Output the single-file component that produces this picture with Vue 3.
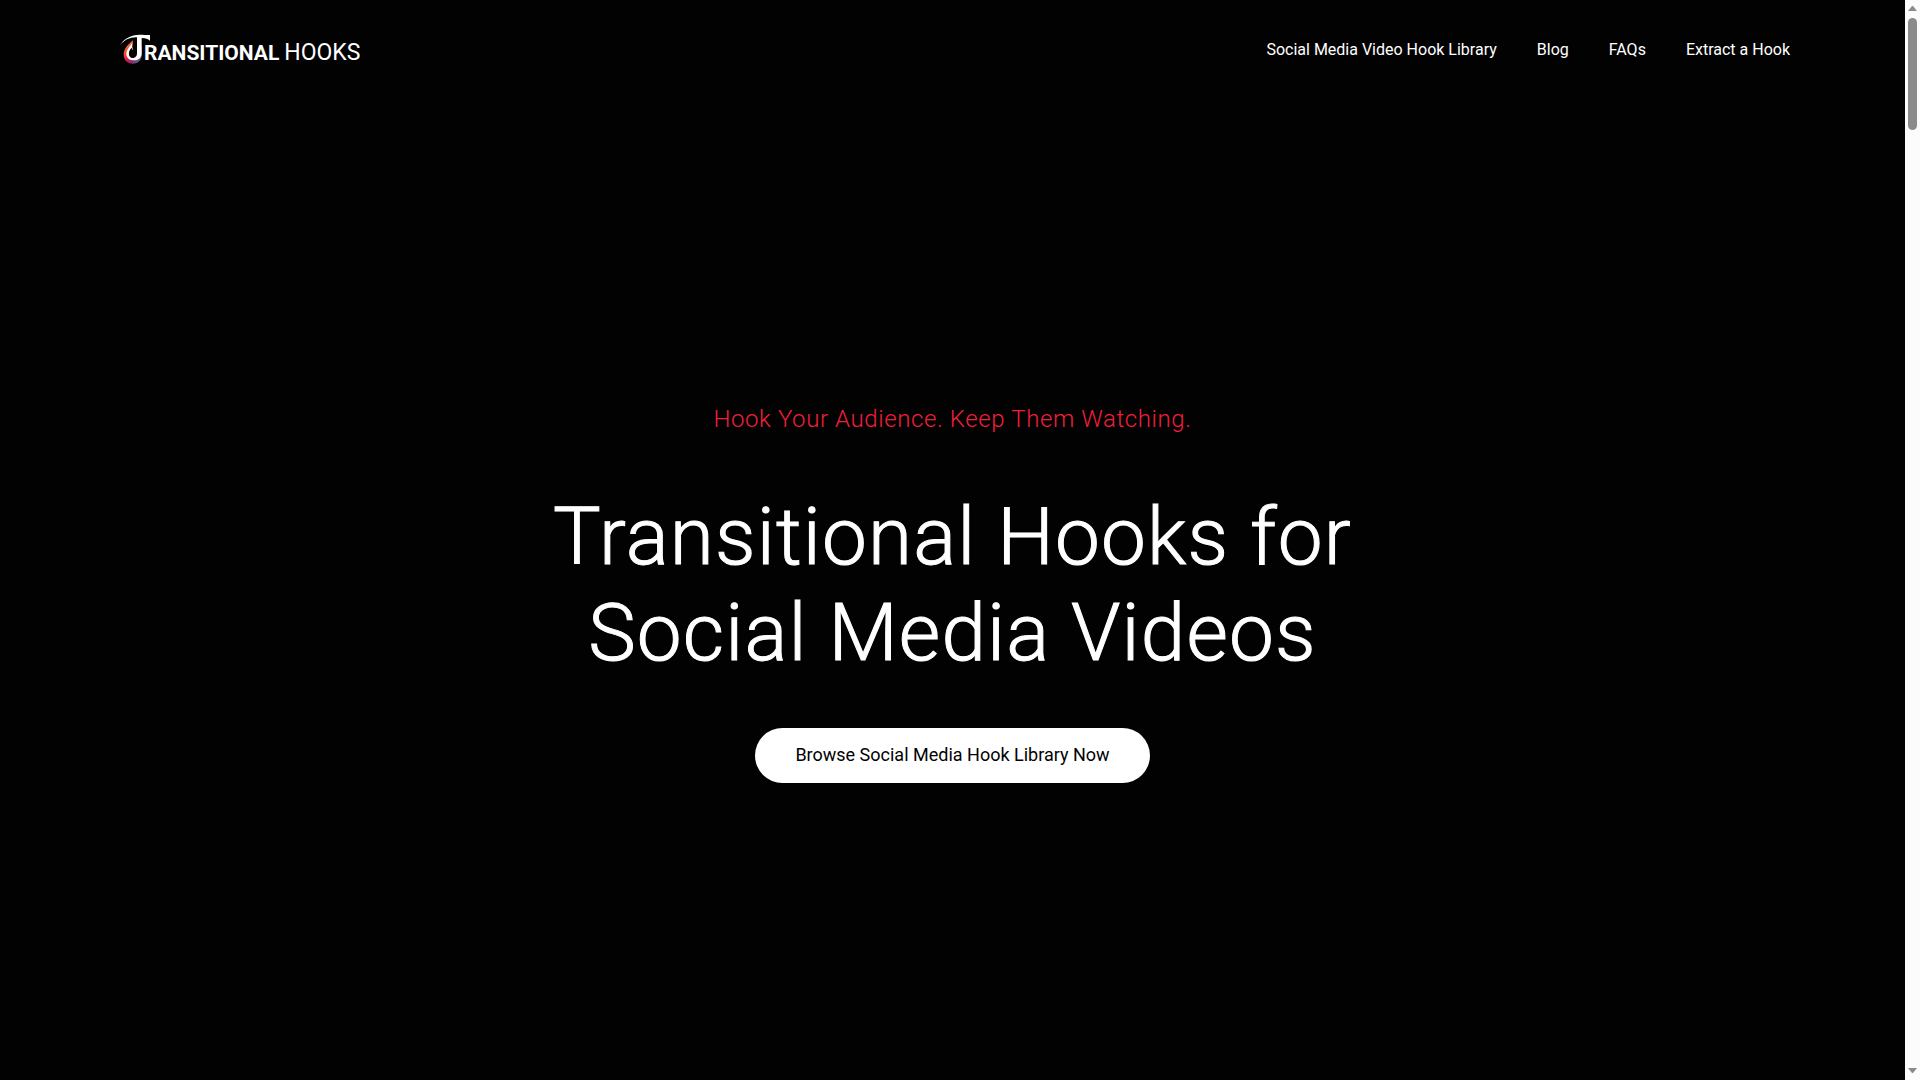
<script setup>
const links = [
  { label: 'Social Media Video Hook Library', href: '#library' },
  { label: 'Blog', href: '#blog' },
  { label: 'FAQs', href: '#faqs' },
  { label: 'Extract a Hook', href: '#extract' },
]
</script>

<template>
  <div class="window">
    <div class="page">
      <header class="header">
        <a class="logo" href="#home" aria-label="Transitional Hooks">
          <svg class="mark" viewBox="0 0 96 96" aria-hidden="true">
            <defs>
              <linearGradient id="glow" x1="0.1" y1="0" x2="0.9" y2="1">
                <stop offset="0" stop-color="#ffa45a" />
                <stop offset="0.3" stop-color="#f4502c" />
                <stop offset="0.55" stop-color="#e8104a" />
                <stop offset="0.75" stop-color="#8a2a70" />
                <stop offset="1" stop-color="#2f8fb0" />
              </linearGradient>
            </defs>
            <path d="M42 22C28 34 13 48 14 66C15 83 27 92 41 92C57 92 69 80 69 62V40L56 50V66L36 80Z" fill="url(#glow)" />
            <path d="M2 38C14 17 36 5 62 5C76 5 88 7 93 6V24C90 19 82 16 68 15V60C68 75 58 82 45 82C32 82 22 75 22 63C22 50 33 40 41 28C38 39 39 45 43 52C40 50 38 48 37 45C31 52 29 58 30 64C31 71 36 75 43 75C51 75 54 69 54 61V13C34 12 16 20 2 38Z" fill="#fff" />
            <path d="M38 44C31 52 29 58 30 65C31 71 36 75 43 75C44 68 41 58 38 44Z" fill="#020202" />
          </svg>
          <span class="words">
            <span class="bold">RANSITIONAL</span>
            <span class="light">HOOKS</span>
          </span>
        </a>
        <nav class="nav">
          <a v-for="link in links" :key="link.label" :href="link.href">{{ link.label }}</a>
        </nav>
      </header>

      <main class="hero">
        <p class="tagline">Hook Your Audience. Keep Them Watching.</p>
        <h1>Transitional Hooks for<br />Social Media Videos</h1>
        <a class="cta" href="#library">Browse Social Media Hook Library Now</a>
      </main>
    </div>

    <div class="scrollbar" aria-hidden="true">
      <svg class="arrow" viewBox="0 0 9 5"><path d="M4 0H5L9 5H0Z" /></svg>
      <div class="thumb"></div>
      <svg class="arrow down" viewBox="0 0 9 5"><path d="M0 0H9L5 5H4Z" /></svg>
    </div>
  </div>
</template>

<style>
body {
  background: #020202;
}
</style>

<style scoped>
.window {
  display: flex;
  min-height: 100vh;
  font-family: Roboto, "Liberation Sans", sans-serif;
  color: #fff;
  background: #020202;
}
.page {
  flex: 1;
  display: flex;
  flex-direction: column;
}
.header {
  display: flex;
  justify-content: space-between;
  align-items: center;
  height: 100px;
  padding: 0 115px;
}
a {
  color: inherit;
  text-decoration: none;
}
.logo {
  display: flex;
  align-items: center;
  margin-left: 4px;
  white-space: nowrap;
}
.mark {
  width: 32px;
  height: 32px;
  margin: 0 -7px 2px 0;
}
.words {
  display: flex;
  align-items: baseline;
  padding-top: 6px;
  line-height: 24px;
}
.bold {
  font-size: 21px;
  font-weight: 700;
}
.light {
  margin-left: 5px;
  font-size: 23px;
  font-weight: 400;
}
.nav {
  display: flex;
  gap: 40px;
  font-size: 16px;
  line-height: 24px;
}
.hero {
  flex: 1;
  display: flex;
  flex-direction: column;
  align-items: center;
  justify-content: center;
  padding-top: 6px;
  text-align: center;
}
.tagline {
  margin: 0 0 54px;
  font-size: 24px;
  font-weight: 300;
  line-height: 32px;
  letter-spacing: 0.025em;
  color: #f21f3a;
}
h1 {
  margin: 0;
  font-size: 80px;
  font-weight: 300;
  line-height: 96px;
  letter-spacing: 0.015em;
  -webkit-text-stroke: 1px #fff;
}
.cta {
  margin-top: 47px;
  padding: 13px 40px 15px;
  border-radius: 28px;
  background: #fff;
  color: #020202;
  font-size: 18px;
  line-height: 27px;
}
.scrollbar {
  position: sticky;
  top: 0;
  display: flex;
  flex-direction: column;
  align-items: center;
  box-sizing: border-box;
  width: 15px;
  height: 100vh;
  padding: 6px 0 7px;
  background: #fcfcfc;
}
.arrow {
  width: 9px;
  height: 5px;
  fill: #8b8b8b;
}
.thumb {
  width: 9px;
  height: 112px;
  margin-top: 7px;
  border-radius: 5px;
  background: #8b8b8b;
}
.down {
  margin-top: auto;
}
</style>
